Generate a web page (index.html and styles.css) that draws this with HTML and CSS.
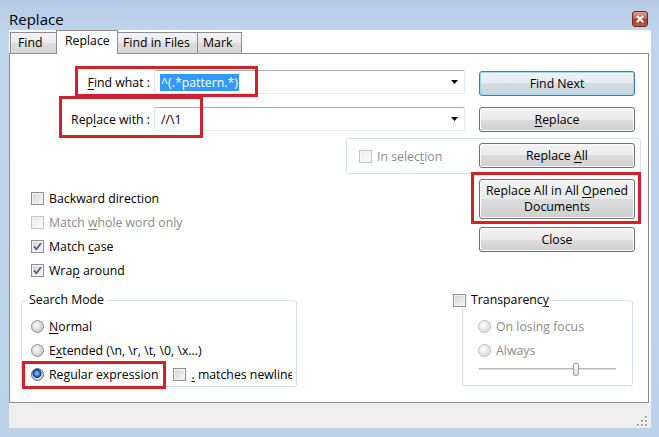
FILE: index.html
```html
<!DOCTYPE html>
<html>
<head>
<meta charset="utf-8">
<title>Replace</title>
<link rel="stylesheet" href="styles.css">
</head>
<body>
<div class="window">
  <div class="titlebar">
    <span class="title">Replace</span>
    <span class="close"><svg width="14" height="14" viewBox="0 0 14 14"><path d="M4.5 4.5 L9.5 9.5 M9.5 4.5 L4.5 9.5" stroke="#fff" stroke-width="2" stroke-linecap="square"/></svg></span>
  </div>
  <div class="client">
    <div class="tabs">
      <div class="tab tab-find">Find</div>
      <div class="tab active">Replace</div>
      <div class="tab tab-files">Find in Files</div>
      <div class="tab tab-mark">Mark</div>
    </div>
    <div class="panel">
      <div class="main">
        <div class="left">
          <div class="field-row find">
            <span class="field-label"><u>F</u>ind what :</span>
            <div class="combo"><span class="sel">^(.*pattern.*)</span><svg class="arrow" width="7" height="4" viewBox="0 0 7 4"><path d="M0 0 H7 L3.5 4 Z" fill="#000"/></svg></div>
            <span class="hl hl-find"></span>
          </div>
          <div class="field-row repl">
            <span class="field-label">Rep<u>l</u>ace with :</span>
            <div class="combo"><span class="val">//\1</span><svg class="arrow" width="7" height="4" viewBox="0 0 7 4"><path d="M0 0 H7 L3.5 4 Z" fill="#000"/></svg></div>
            <span class="hl hl-repl"></span>
          </div>
          <div class="inselect">
            <span class="cb disabled"></span>
            <span class="dis">In selec<u>t</u>ion</span>
          </div>
          <div class="options">
            <div class="check-row"><span class="cb"></span><span>Backward direction</span></div>
            <div class="check-row dis"><span class="cb disabled"></span><span>Match <u>w</u>hole word only</span></div>
            <div class="check-row"><span class="cb"><svg width="11" height="11" viewBox="0 0 11 11"><path d="M2 5.5 L4.3 8.2 L9 2.2" fill="none" stroke="#4a5c8c" stroke-width="1.7"/></svg></span><span>Match <u>c</u>ase</span></div>
            <div class="check-row"><span class="cb"><svg width="11" height="11" viewBox="0 0 11 11"><path d="M2 5.5 L4.3 8.2 L9 2.2" fill="none" stroke="#4a5c8c" stroke-width="1.7"/></svg></span><span>Wra<u>p</u> around</span></div>
          </div>
        </div>
        <div class="buttons">
          <button class="btn default">Find Next</button>
          <button class="btn"><span><u>R</u>eplace</span></button>
          <button class="btn"><span>Replace <u>A</u>ll</span></button>
          <button class="btn tall"><span>Replace All in All <u>O</u>pened<br>Documents</span><span class="hl hl-all"></span></button>
          <button class="btn">Close</button>
        </div>
      </div>
      <div class="bottom">
        <fieldset class="group search">
          <legend>Search Mode</legend>
          <div class="group-body">
            <div class="check-row"><span class="rb"></span><span><u>N</u>ormal</span></div>
            <div class="check-row"><span class="rb"></span><span>E<u>x</u>tended (\n, \r, \t, \0, \x...)</span></div>
            <div class="check-row regex">
              <span class="rb on"></span><span>Re<u>g</u>ular expression</span>
              <span class="cb nl"></span><span class="clip"><u>.</u> matches newline</span>
              <span class="hl hl-regex"></span>
            </div>
          </div>
        </fieldset>
        <fieldset class="group transp">
          <legend><span class="legend-inner"><span class="cb"></span><span>Transparenc<u>y</u></span></span></legend>
          <div class="group-body">
            <div class="check-row dis"><span class="rb disabled"></span><span>On losing focus</span></div>
            <div class="check-row dis"><span class="rb disabled"></span><span>Always</span></div>
            <div class="slider"><span class="track"></span><span class="thumb"></span></div>
          </div>
        </fieldset>
      </div>
    </div>
    <div class="statusbar">
      <svg class="grip" width="11" height="11" viewBox="0 0 11 11">
        <g fill="#fff"><rect x="9" y="1" width="2" height="2"/><rect x="9" y="5" width="2" height="2"/><rect x="5" y="5" width="2" height="2"/><rect x="9" y="9" width="2" height="2"/><rect x="5" y="9" width="2" height="2"/><rect x="1" y="9" width="2" height="2"/></g>
        <g fill="#a3a7ab"><rect x="8" y="0" width="2" height="2"/><rect x="8" y="4" width="2" height="2"/><rect x="4" y="4" width="2" height="2"/><rect x="8" y="8" width="2" height="2"/><rect x="4" y="8" width="2" height="2"/><rect x="0" y="8" width="2" height="2"/></g>
      </svg>
    </div>
  </div>
</div>
</body>
</html>
```

FILE: styles.css
```css
* { box-sizing: border-box; }
html, body { margin: 0; padding: 0; }
body {
  width: 659px;
  height: 437px;
  overflow: hidden;
  font-family: "Open Sans", "Noto Sans", sans-serif;
  font-size: 12.3px;
  color: #000;
}
u { text-decoration: underline; text-underline-offset: 2px; }

.window {
  width: 659px;
  height: 437px;
  display: flex;
  flex-direction: column;
  padding: 0 8px 9px 9px;
  background: linear-gradient(#b4cae4 0px, #c0d5ec 30px, #bcd2ea 100%);
}

.titlebar {
  height: 30px;
  display: flex;
  align-items: flex-start;
  justify-content: space-between;
  flex: none;
}
.title {
  font-size: 15px;
  line-height: 20px;
  margin-top: 9px;
  color: #000;
}
.close {
  width: 16px;
  height: 16px;
  margin-top: 11px;
  margin-right: 3px;
  border: 1px solid #6e2c22;
  border-radius: 3px;
  background: linear-gradient(#d99a8e, #c0604f 50%, #a93f2c 51%, #b85a44);
  display: flex;
  align-items: center;
  justify-content: center;
}

.client {
  flex: 1;
  display: flex;
  flex-direction: column;
  background: #fff;
}

.tabs {
  height: 23px;
  flex: none;
  display: flex;
  align-items: flex-end;
  padding-left: 1px;
}
.tab {
  height: 21px;
  border: 1px solid #898c95;
  border-bottom: none;
  background: linear-gradient(#f3f3f3, #ebebeb 50%, #dddddd 50%, #d6d6d6);
  line-height: 19px;
  padding: 0 6px;
  margin-right: -1px;
  white-space: nowrap;
}
.tab-find { width: 48px; padding-left: 7px; }
.tab.active {
  height: 24px;
  background: #fff;
  margin: 0 -1px -1px -1px;
  padding: 0 8px;
  width: 62px;
  line-height: 19px;
  position: relative;
  z-index: 1;
}
.tab-files { width: 81px; padding-left: 5px; }
.tab-mark { width: 45px; padding-left: 5px; }

.panel {
  height: 350px;
  flex: none;
  border: 1px solid #898c95;
  margin-right: 2px;
}

.main {
  display: flex;
  height: 228px;
}
.left {
  width: 469px;
  flex: none;
}
.buttons {
  width: 156px;
  flex: none;
  display: flex;
  flex-direction: column;
  padding-top: 17px;
  position: relative;
  z-index: 1;
}

.field-row {
  display: flex;
  align-items: center;
  height: 24px;
  position: relative;
}
.field-row.find { margin-top: 16px; }
.field-row.repl { margin-top: 13px; }
.field-label {
  width: 140px;
  text-align: right;
  margin-right: 4px;
  white-space: nowrap;
}
.combo {
  width: 311px;
  height: 24px;
  border: 1px solid #abadb3;
  border-color: #abadb3 #e3e9ef #e3e9ef #e2e3ea;
  border-radius: 2px;
  display: flex;
  align-items: center;
  padding: 0 6px 0 5px;
}
.combo .arrow { margin-left: auto; }
.sel {
  background: #3399ff;
  color: #fff;
  padding: 0 1px;
  line-height: 17px;
}
.val { padding-left: 1px; }

.hl {
  position: absolute;
  border: 3px solid #d4202b;
  pointer-events: none;
}
.hl-find { left: 65px; top: -4px; width: 183px; height: 31px; }
.hl-repl { left: 49px; top: -11px; width: 144px; height: 42px; }
.hl-all { left: -9px; top: -8px; right: -7px; bottom: -6px; }
.hl-regex { left: -9px; top: -1px; width: 144px; height: 28px; }

.inselect {
  margin: 7px 0 0 336px;
  width: 295px;
  height: 36px;
  border: 1px solid #d5dfe5;
  border-radius: 3px;
  display: flex;
  align-items: center;
  gap: 5px;
  padding-left: 12px;
}
.dis { color: #8a8a8a; }

.options {
  margin-top: 12px;
  padding-left: 21px;
}
.check-row {
  height: 24px;
  display: flex;
  align-items: center;
  gap: 5px;
  white-space: nowrap;
}

.cb {
  width: 13px;
  height: 13px;
  flex: none;
  border: 1px solid #8e8f8f;
  background: linear-gradient(135deg, #d3d3d3, #f7f7f7);
  box-shadow: inset 0 0 0 1px #f4f4f4;
  display: flex;
  align-items: center;
  justify-content: center;
}
.cb.disabled {
  border-color: #c4c4c4;
  background: linear-gradient(135deg, #ececec, #fafafa);
}

.rb {
  width: 13px;
  height: 13px;
  flex: none;
  border-radius: 50%;
  border: 1px solid #8e8f8f;
  background: radial-gradient(circle at 40% 40%, #fbfbfb 0, #e6e6e6 3px, #cfcfcf 6px);
}
.rb.on {
  border-color: #5c6f8c;
  background:
    radial-gradient(circle at 45% 40%, #a8dcfb 0, #3b8ee0 2px, #1b55a8 3.5px, #10305e 4.2px, rgba(0,0,0,0) 4.8px),
    radial-gradient(circle at 40% 40%, #fbfbfb 0, #e6e6e6 3px, #cfcfcf 6px);
}
.rb.disabled {
  border-color: #bcbcbc;
  background: radial-gradient(circle at 40% 40%, #fdfdfd 0, #f0f0f0 3px, #e2e2e2 6px);
}

.btn {
  height: 25px;
  flex: none;
  margin: 0 0 11px 0;
  padding: 0;
  border: 1px solid #707070;
  border-radius: 3px;
  background: linear-gradient(#f2f2f2, #ebebeb 50%, #dddddd 50%, #cfcfcf);
  box-shadow: inset 0 0 0 1px #fcfcfc;
  font: inherit;
  color: #000;
  line-height: 16px;
  text-align: center;
  display: flex;
  align-items: center;
  justify-content: center;
  position: relative;
}
.btn.default {
  border-color: #3c7fb1;
  box-shadow: inset 0 0 0 1px #9fd6ef;
  background: linear-gradient(#eef4f8, #e4ecf1 50%, #d5dee4 50%, #c8d3da);
}
.btn.tall {
  height: 40px;
  margin-bottom: 8px;
}

.bottom {
  display: flex;
  align-items: flex-start;
  margin-top: 10px;
}
.group {
  margin: 0;
  padding: 0;
  min-width: 0;
  border: 1px solid #d5dfe5;
  border-radius: 3px;
}
.group legend {
  line-height: 16px;
  padding: 0 3px;
  margin-left: 4px;
}
.search {
  margin-left: 11px;
  width: 276px;
  height: 95px;
}
.transp {
  margin-left: 165px;
  width: 171px;
  height: 94px;
}
.transp legend {
  margin-left: -10px;
  padding: 0 2px 0 0;
}
.legend-inner {
  display: flex;
  align-items: center;
  gap: 5px;
}
.group-body {
  padding-top: 6px;
}
.search .group-body {
  padding-left: 9px;
  padding-right: 4px;
}
.transp .group-body { padding-left: 15px; }
.regex { position: relative; }
.cb.nl { margin-left: 10px; }
.clip {
  flex: 1;
  min-width: 0;
  overflow: hidden;
  white-space: nowrap;
}

.slider {
  margin-left: 1px;
  width: 137px;
  height: 14px;
  display: flex;
  align-items: center;
  position: relative;
}
.track {
  width: 100%;
  height: 2px;
  background: #dcdcdc;
  border-top: 1px solid #b8b8b8;
}
.thumb {
  position: absolute;
  left: 94px;
  top: 1px;
  width: 6px;
  height: 13px;
  border: 1px solid #a5a5a5;
  border-radius: 2px;
  background: linear-gradient(#fafafa, #e0e0e0);
}

.statusbar {
  flex: 1;
  background: #efeeee;
  display: flex;
  justify-content: flex-end;
  align-items: flex-end;
  padding: 0 3px 1px 0;
}
```
